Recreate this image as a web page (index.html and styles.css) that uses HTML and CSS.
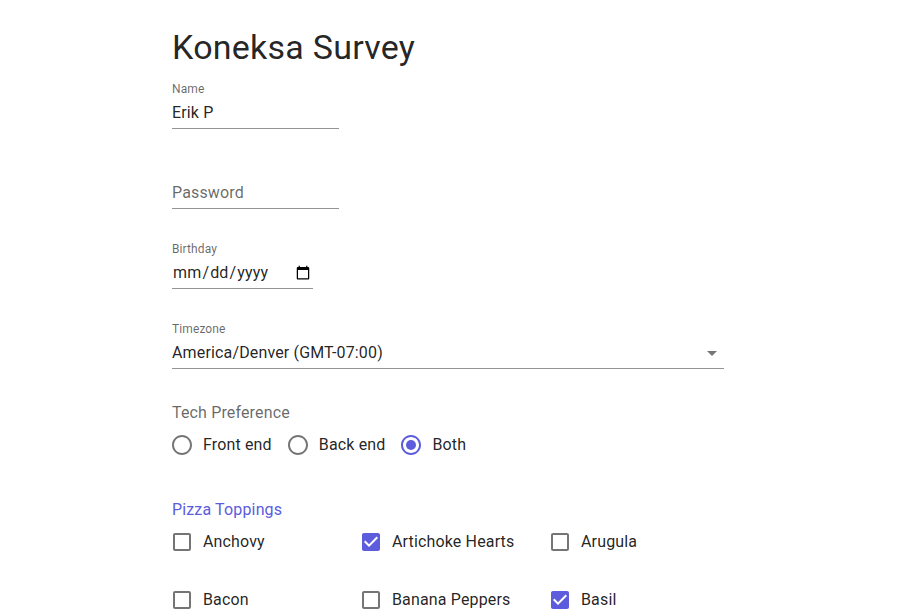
FILE: index.html
```html
<!DOCTYPE html>
<html lang="en">
<head>
<meta charset="utf-8">
<title>Koneksa Survey</title>
<link rel="stylesheet" href="styles.css">
</head>
<body>
<main class="page">
  <h1 class="title">Koneksa Survey</h1>

  <div class="field">
    <label class="field-label" for="name">Name</label>
    <div class="control control--name"><input id="name" class="input" type="text" value="Erik P"></div>
  </div>

  <div class="field field--bare">
    <div class="control control--name"><input class="input" type="password" placeholder="Password" aria-label="Password"></div>
  </div>

  <div class="field">
    <label class="field-label" for="bday">Birthday</label>
    <div class="control control--date"><input id="bday" class="input" type="date"></div>
  </div>

  <div class="field">
    <span class="field-label">Timezone</span>
    <div class="control control--select">
      <span class="select-value">America/Denver (GMT-07:00)</span>
      <svg class="select-arrow" viewBox="0 0 24 24" width="24" height="24"><path d="M7 10l5 5 5-5z"/></svg>
    </div>
  </div>

  <div class="group">
    <div class="group-label">Tech Preference</div>
    <div class="options">
      <label class="opt">
        <span class="opt-btn"><svg class="ico" viewBox="0 0 24 24"><path d="M12 2C6.48 2 2 6.48 2 12s4.480 10 10 10 10-4.48 10-10S17.52 2 12 2zm0 18c-4.42 0-8-3.58-8-8s3.58-8 8-8 8 3.58 8 8-3.58 8-8 8z"/></svg></span>
        <span class="opt-text">Front end</span>
      </label>
      <label class="opt">
        <span class="opt-btn"><svg class="ico" viewBox="0 0 24 24"><path d="M12 2C6.48 2 2 6.48 2 12s4.48 10 10 10 10-4.48 10-10S17.52 2 12 2zm0 18c-4.42 0-8-3.58-8-8s3.58-8 8-8 8 3.58 8 8-3.58 8-8 8z"/></svg></span>
        <span class="opt-text">Back end</span>
      </label>
      <label class="opt">
        <span class="opt-btn"><svg class="ico ico--on" viewBox="0 0 24 24"><path d="M12 2C6.48 2 2 6.48 2 12s4.48 10 10 10 10-4.48 10-10S17.52 2 12 2zm0 18c-4.42 0-8-3.58-8-8s3.58-8 8-8 8 3.58 8 8-3.58 8-8 8z"/><circle cx="12" cy="12" r="5"/></svg></span>
        <span class="opt-text">Both</span>
      </label>
    </div>
  </div>

  <div class="group">
    <div class="group-label group-label--active">Pizza Toppings</div>
    <div class="checks">
      <label class="opt">
        <span class="opt-btn"><svg class="ico" viewBox="0 0 24 24"><path d="M19 5v14H5V5h14m0-2H5c-1.11 0-2 .9-2 2v14c0 1.1.89 2 2 2h14c1.1 0 2-.9 2-2V5c0-1.1-.9-2-2-2z"/></svg></span>
        <span class="opt-text">Anchovy</span>
      </label>
      <label class="opt">
        <span class="opt-btn"><svg class="ico ico--on" viewBox="0 0 24 24"><path d="M19 3H5c-1.11 0-2 .9-2 2v14c0 1.1.89 2 2 2h14c1.11 0 2-.9 2-2V5c0-1.1-.89-2-2-2zm-9 14l-5-5 1.41-1.41L10 14.17l7.59-7.59L19 8l-9 9z"/></svg></span>
        <span class="opt-text">Artichoke Hearts</span>
      </label>
      <label class="opt">
        <span class="opt-btn"><svg class="ico" viewBox="0 0 24 24"><path d="M19 5v14H5V5h14m0-2H5c-1.11 0-2 .9-2 2v14c0 1.1.89 2 2 2h14c1.1 0 2-.9 2-2V5c0-1.1-.9-2-2-2z"/></svg></span>
        <span class="opt-text">Arugula</span>
      </label>
      <label class="opt">
        <span class="opt-btn"><svg class="ico" viewBox="0 0 24 24"><path d="M19 5v14H5V5h14m0-2H5c-1.11 0-2 .9-2 2v14c0 1.1.89 2 2 2h14c1.1 0 2-.9 2-2V5c0-1.1-.9-2-2-2z"/></svg></span>
        <span class="opt-text">Bacon</span>
      </label>
      <label class="opt">
        <span class="opt-btn"><svg class="ico" viewBox="0 0 24 24"><path d="M19 5v14H5V5h14m0-2H5c-1.11 0-2 .9-2 2v14c0 1.1.89 2 2 2h14c1.1 0 2-.9 2-2V5c0-1.1-.9-2-2-2z"/></svg></span>
        <span class="opt-text">Banana Peppers</span>
      </label>
      <label class="opt">
        <span class="opt-btn"><svg class="ico ico--on" viewBox="0 0 24 24"><path d="M19 3H5c-1.11 0-2 .9-2 2v14c0 1.1.89 2 2 2h14c1.11 0 2-.9 2-2V5c0-1.1-.89-2-2-2zm-9 14l-5-5 1.41-1.41L10 14.17l7.59-7.59L19 8l-9 9z"/></svg></span>
        <span class="opt-text">Basil</span>
      </label>
    </div>
  </div>
</main>
</body>
</html>
```

FILE: styles.css
```css
html, body {
  margin: 0;
  overflow: hidden;
  background: #fff;
}

body {
  font-family: Roboto, "Noto Sans", Arial, sans-serif;
  color: rgba(0, 0, 0, 0.87);
}

.page {
  width: 563px;
  margin: 0 auto;
  padding-top: 26px;
  display: flex;
  flex-direction: column;
  align-items: flex-start;
}

.title {
  margin: 0 0 13px;
  font-size: 34px;
  font-weight: 400;
  line-height: 42px;
  letter-spacing: 0.25px;
}

.field {
  display: flex;
  flex-direction: column;
  align-items: flex-start;
  margin-bottom: 32px;
}

.field--bare {
  padding-top: 16px;
}

.field-label {
  display: block;
  height: 16px;
  font-size: 12px;
  line-height: 16px;
  letter-spacing: 0.11px;
  color: rgba(0, 0, 0, 0.6);
}

.control {
  box-sizing: border-box;
  height: 32px;
  padding: 4px 0 4px;
  border-bottom: 1px solid rgba(0, 0, 0, 0.42);
  display: flex;
  align-items: center;
}

.control--name { width: 167px; }
.control--date { width: 141px; }
.control--select {
  width: 552px;
  justify-content: space-between;
}

.input {
  width: 100%;
  height: 23px;
  margin: 0;
  padding: 0;
  border: 0;
  outline: 0;
  background: transparent;
  font: inherit;
  font-size: 16px;
  letter-spacing: 0.15px;
  color: rgba(0, 0, 0, 0.87);
}

.input::placeholder {
  color: rgba(0, 0, 0, 0.6);
  opacity: 1;
}

.select-value {
  font-size: 16px;
  line-height: 23px;
  letter-spacing: 0.15px;
}

.select-arrow {
  fill: rgba(0, 0, 0, 0.54);
}

.group {
  display: flex;
  flex-direction: column;
  align-items: flex-start;
  margin-top: 4px;
  margin-bottom: 32px;
}

.group-label {
  font-size: 16px;
  line-height: 16px;
  letter-spacing: 0.15px;
  color: rgba(0, 0, 0, 0.6);
}

.group-label--active {
  color: #5c5cdd;
}

.options {
  display: flex;
  margin-top: 3px;
}

.checks {
  display: grid;
  grid-template-columns: repeat(3, 189px);
  row-gap: 16px;
  margin-top: 3px;
}

.opt {
  display: flex;
  align-items: center;
  margin-left: -11px;
  margin-right: 16px;
  cursor: pointer;
}

.opt-btn {
  display: flex;
  padding: 9px;
}

.ico {
  width: 24px;
  height: 24px;
  fill: rgba(0, 0, 0, 0.54);
}

.ico--on {
  fill: #5c5cdd;
}

.opt-text {
  font-size: 16px;
  line-height: 24px;
  letter-spacing: 0.15px;
}
```
